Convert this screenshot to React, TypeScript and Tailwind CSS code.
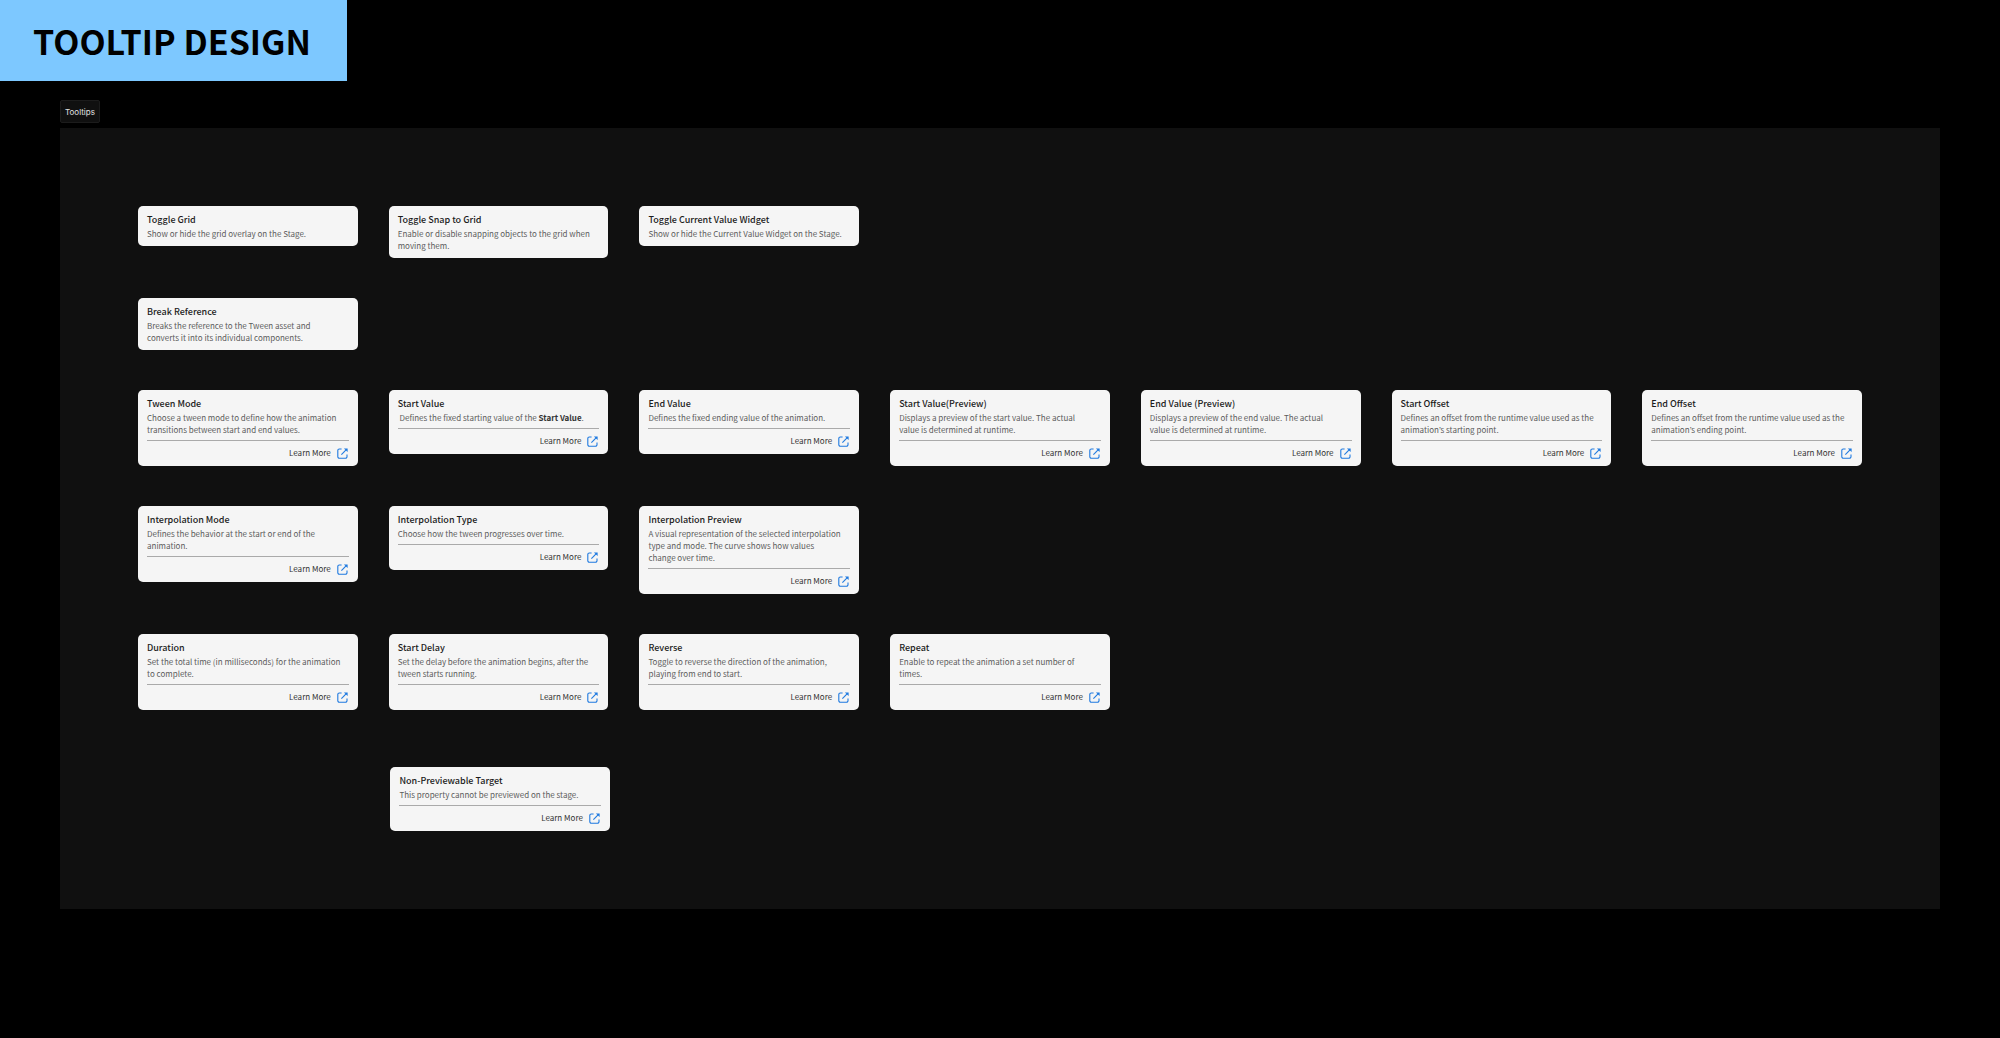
import React from "react";

type Tip = {
  title: string;
  body: React.ReactNode;
  link?: boolean;
};

const rows: Tip[][] = [
  [
    { title: "Toggle Grid", body: "Show or hide the grid overlay on the Stage." },
    { title: "Toggle Snap to Grid", body: "Enable or disable snapping objects to the grid when\nmoving them." },
    { title: "Toggle Current Value Widget", body: "Show or hide the Current Value Widget on the Stage." },
  ],
  [{ title: "Break Reference", body: "Breaks the reference to the Tween asset and\nconverts it into its individual components." }],
  [
    { title: "Tween Mode", body: "Choose a tween mode to define how the animation\ntransitions between start and end values.", link: true },
    {
      title: "Start Value",
      body: (
        <>
          &nbsp;Defines the fixed starting value of the <strong className="font-bold text-[#333333]">Start Value</strong>.
        </>
      ),
      link: true,
    },
    { title: "End Value", body: "Defines the fixed ending value of the animation.", link: true },
    { title: "Start Value(Preview)", body: "Displays a preview of the start value. The actual\nvalue is determined at runtime.", link: true },
    { title: "End Value (Preview)", body: "Displays a preview of the end value. The actual\nvalue is determined at runtime.", link: true },
    { title: "Start Offset", body: "Defines an offset from the runtime value used as the\nanimation’s starting point.", link: true },
    { title: "End Offset", body: "Defines an offset from the runtime value used as the\nanimation’s ending point.", link: true },
  ],
  [
    { title: "Interpolation Mode", body: "Defines the behavior at the start or end of the\nanimation.", link: true },
    { title: "Interpolation Type", body: "Choose how the tween progresses over time.", link: true },
    {
      title: "Interpolation Preview",
      body: "A visual representation of the selected interpolation\ntype and mode. The curve shows how values\nchange over time.",
      link: true,
    },
  ],
  [
    { title: "Duration", body: "Set the total time (in milliseconds) for the animation\nto complete.", link: true },
    { title: "Start Delay", body: "Set the delay before the animation begins, after the\ntween starts running.", link: true },
    { title: "Reverse", body: "Toggle to reverse the direction of the animation,\nplaying from end to start.", link: true },
    { title: "Repeat", body: "Enable to repeat the animation a set number of\ntimes.", link: true },
  ],
];

function OpenIcon() {
  return (
    <svg className="size-[11px]" viewBox="0 0 11 11" fill="none" stroke="#1f7ae0" strokeWidth="1.1" aria-hidden="true">
      <path d="M4.6 1H2.3A1.5 1.5 0 0 0 .8 2.5v6.200A1.5 1.5 0 0 0 2.3 10.200H8.500A1.5 1.5 0 0 0 10 8.700V6.400" />
      <path d="M4.400 6.600 9.300 1.700" />
      <path d="M6.900 .4H10.600V4.100Z" fill="#1f7ae0" stroke="none" />
    </svg>
  );
}

function TooltipCard({ tip }: { tip: Tip }) {
  return (
    <article className="rounded-[5px] bg-[#f5f5f5] px-[9px] pt-2 pb-1.5">
      <h2 className="text-[9px] leading-3 font-medium text-[#1c1c1c]">{tip.title}</h2>
      <p className="mt-[2px] text-[8px] leading-3 whitespace-pre-line text-[#5c5c5c]">{tip.body}</p>
      {tip.link && (
        <div className="mt-1 flex justify-end border-t border-[#aaaaaa] pt-[5px] pr-px">
          <a href="#learn-more" className="flex h-[14px] items-center gap-1.5 text-[8px] text-[#333333]">
            Learn More
            <OpenIcon />
          </a>
        </div>
      )}
    </article>
  );
}

export default function App() {
  return (
    <div className="min-h-screen bg-black font-['Noto_Sans_CJK_KR',sans-serif]">
      <header className="flex h-[81px] w-fit items-center bg-[#7dc8ff] pr-9 pl-[33px]">
        <h1 className="text-[34px] leading-none font-bold text-black">TOOLTIP DESIGN</h1>
      </header>
      <main className="mx-[60px] pt-[19px]">
        <div className="flex h-[23px] w-fit items-center rounded-xs border border-[#1c1c1c] bg-[#101010] px-1 font-[Inter,sans-serif] text-[8px] text-[#e0e0e0]">
          Tooltips
        </div>
        <section className="mt-[5px] bg-[#101010] p-[78px]">
          <div className="flex flex-col gap-10">
            {rows.map((row) => (
              <div key={row[0].title} className="grid grid-cols-7 items-start gap-x-[31px]">
                {row.map((tip) => (
                  <TooltipCard key={tip.title} tip={tip} />
                ))}
              </div>
            ))}
          </div>
          <div className="mt-[57px] ml-[2px] grid grid-cols-7 gap-x-[31px]">
            <div className="col-start-2">
              <TooltipCard
                tip={{ title: "Non-Previewable Target", body: "This property cannot be previewed on the stage.", link: true }}
              />
            </div>
          </div>
        </section>
      </main>
    </div>
  );
}
